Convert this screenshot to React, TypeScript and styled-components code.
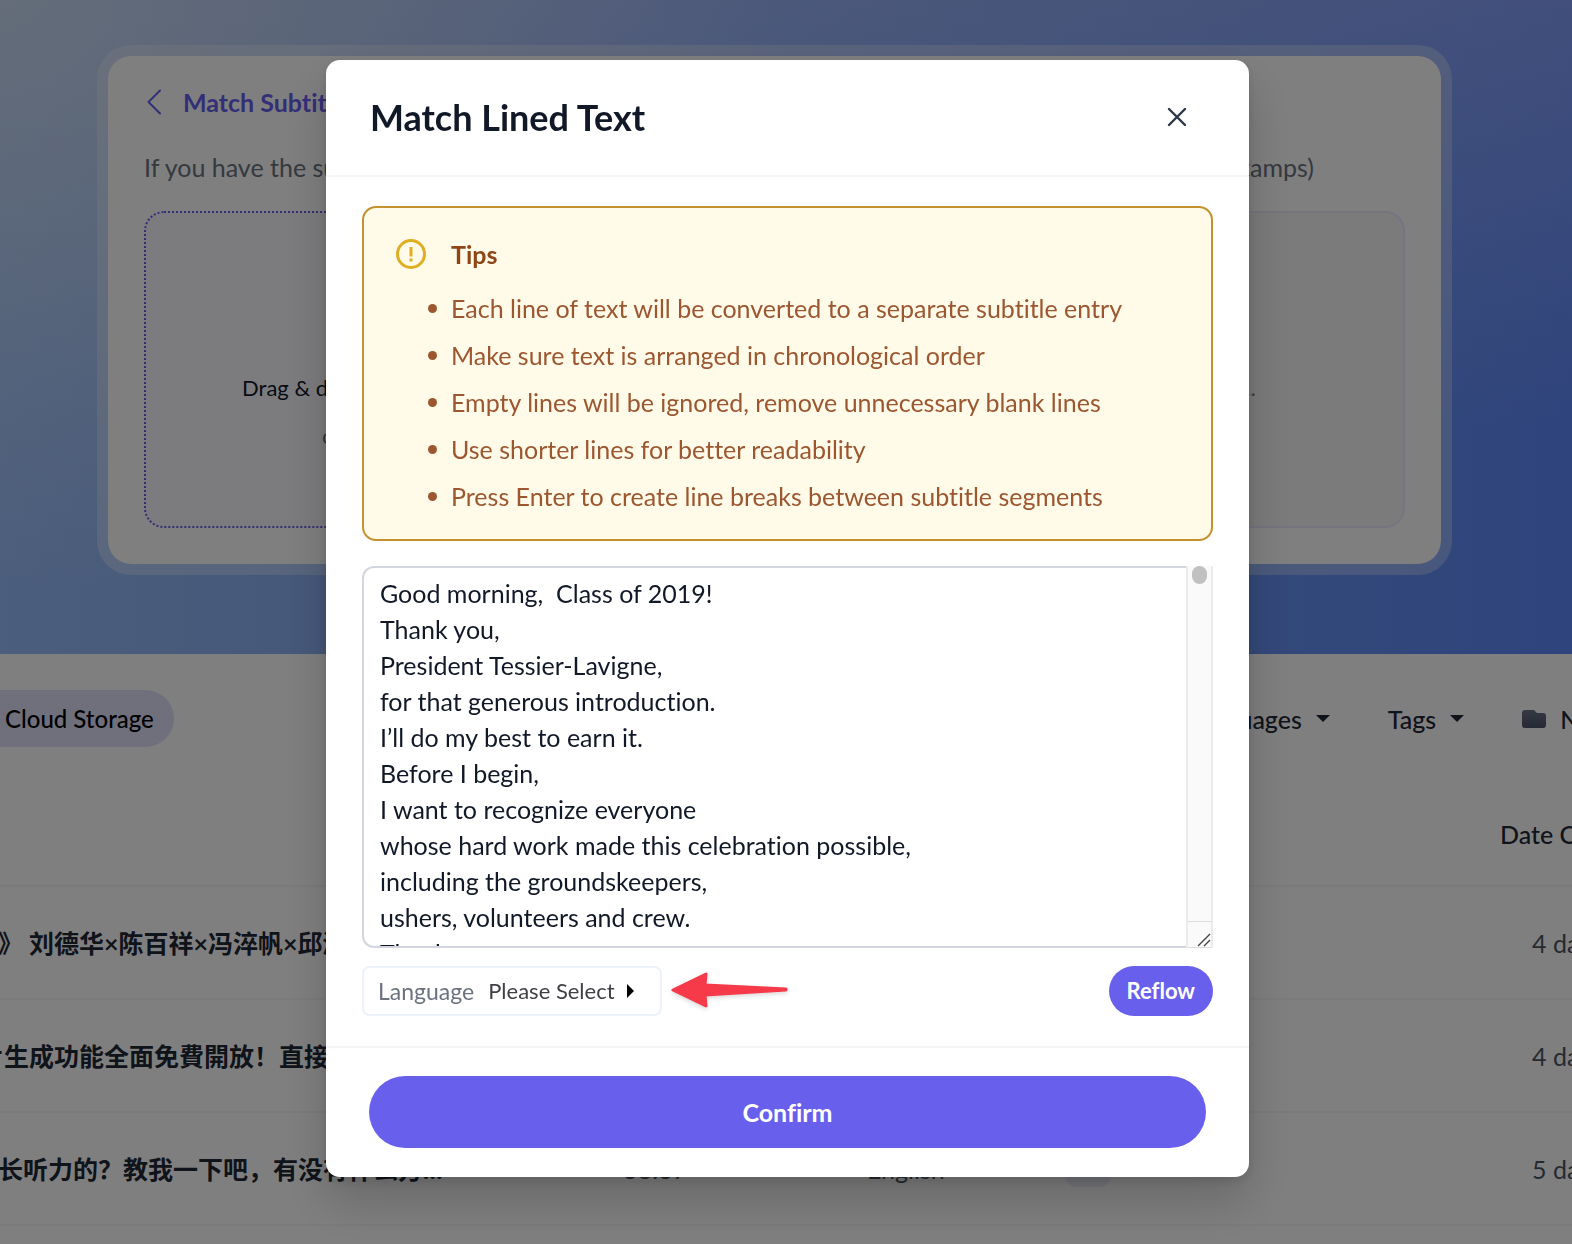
import React, { useState } from "react";
import styled, { createGlobalStyle } from "styled-components";

const GlobalStyle = createGlobalStyle`
  *, *::before, *::after { box-sizing: border-box; }
  html, body, #root { height: 100%; }
  body {
    margin: 0;
    overflow: hidden;
    background: #fff;
    color: #1f2937;
    font-family: Lato, "Noto Sans CJK SC", sans-serif;
    font-size: 25px;
    line-height: 36px;
    font-variant-ligatures: none;
  }
  button, select, textarea { font: inherit; font-variant-ligatures: none; color: inherit; margin: 0; }
  h1, h2, h3, p, ul { margin: 0; padding: 0; }
`;

const Page = styled.div`
  height: 100%;
  overflow: hidden;
`;

const Hero = styled.section`
  padding: 45px 120px 79px 97px;
  background:
    radial-gradient(ellipse 50% 90% at 0% 0%, rgba(228, 240, 236, 0.5), rgba(228, 240, 240, 0) 100%),
    linear-gradient(to bottom, rgba(225, 215, 250, 0.28), rgba(225, 215, 250, 0) 65%),
    linear-gradient(to right, #98bcfa 0%, #8cb0f4 22%, #6893f4 80%, #5e88f8 100%);
`;

const HeroCard = styled.div`
  display: flex;
  flex-direction: column;
  height: 530px;
  padding: 25px 36px 36px;
  border: 11px solid rgba(255, 255, 255, 0.3);
  border-radius: 34px;
  background: #fff;
  background-clip: padding-box;
`;

const BackButton = styled.button`
  display: flex;
  align-items: center;
  gap: 22px;
  align-self: flex-start;
  padding: 3px 3px;
  border: 0;
  background: none;
  color: #675eee;
  font-weight: 700;
`;

const Intro = styled.p`
  display: flex;
  justify-content: space-between;
  padding: 26px 91px 26px 0;
  color: #6b7280;
`;

const Zones = styled.div`
  display: grid;
  grid-template-columns: 1fr 1fr;
  gap: 24px;
  flex: 1;
`;

const Zone = styled.div<{ $active?: boolean }>`
  display: flex;
  flex-direction: column;
  align-items: center;
  justify-content: center;
  gap: 12px;
  padding-top: 84px;
  border: 2px ${(p) => (p.$active ? "dotted #675eee" : "solid #eaeaff")};
  border-radius: 20px;
  background: ${(p) => (p.$active ? "#f8f9ff" : "#f6f6f6")};
  font-size: 22px;
  color: #111827;
`;

const Muted = styled.span`
  color: #6b7280;
`;

const Toolbar = styled.div`
  display: flex;
  align-items: center;
  justify-content: space-between;
  padding-top: 36px;
`;

const Pill = styled.button`
  height: 57px;
  padding: 0 20px 0 5px;
  border: 0;
  border-radius: 0 29px 29px 0;
  background: #e1e0fa;
  color: #000;
  font-size: 24px;
  font-weight: 500;
`;

const Filters = styled.div`
  display: flex;
  align-items: center;
  gap: 58px;
  width: 386px;
  font-size: 25px;
  font-weight: 500;
`;

const Filter = styled.button`
  display: flex;
  flex: none;
  align-items: center;
  gap: 14px;
  padding: 0;
  border: 0;
  background: none;
`;

const Caret = styled.span`
  border: 7px solid transparent;
  border-top-color: currentColor;
  border-bottom: 0;
`;

const Recordings = styled.table`
  width: calc(100% + 127px);
  margin: 26px 0 0 -27px;
  border-collapse: collapse;
  table-layout: fixed;
  text-align: left;

  th, td {
    height: 113px;
    padding: 0;
    border-bottom: 2px solid #f7f7fc;
    white-space: nowrap;
    overflow: hidden;
  }
  th { padding-top: 10px; font-weight: 500; }
  td { color: #4b5563; }
  td:first-child { color: #1f2937; font-weight: 700; }
  td:last-child { padding-left: 32px; }
`;

const Col = styled.col<{ $w?: number }>`
  width: ${(p) => (p.$w ? `${p.$w}px` : "auto")};
`;

const Tag = styled.span`
  display: block;
  width: 46px;
  height: 36px;
  border-radius: 12px;
  background: #eef0fa;
`;

const Overlay = styled.div`
  position: fixed;
  inset: 0;
  display: flex;
  align-items: flex-start;
  justify-content: center;
  padding: 60px 20px 0 23px;
  background: rgba(0, 0, 0, 0.5);
`;

const Modal = styled.section`
  width: 100%;
  max-width: 923px;
  border-radius: 14px;
  background: #fff;
  box-shadow: 0 24px 48px rgba(0, 0, 0, 0.18), 0 4px 12px rgba(0, 0, 0, 0.12);
`;

const ModalHeader = styled.header`
  display: flex;
  align-items: center;
  justify-content: space-between;
  height: 117px;
  padding: 0 54px 2px 44px;
  border-bottom: 2px solid #f5f5f5;
`;

const ModalTitle = styled.h2`
  color: #111827;
  font-size: 36px;
  line-height: 44px;
  font-weight: 700;
`;

const CloseButton = styled.button`
  display: flex;
  padding: 8px;
  border: 0;
  background: none;
  color: #2b3648;
`;

const ModalBody = styled.div`
  padding: 29px 36px 30px;
`;

const Tips = styled.section`
  display: grid;
  grid-template-columns: 30px 1fr;
  column-gap: 25px;
  align-items: center;
  padding: 28px 32px 25px;
  border: 2px solid #c5902f;
  border-radius: 14px;
  background: #fffbe8;
  color: #9c5630;
`;

const TipsTitle = styled.h3`
  color: #8f4617;
  font-size: 25px;
  font-weight: 700;
`;

const TipList = styled.ul`
  grid-column: 2;
  display: flex;
  flex-direction: column;
  gap: 11px;
  margin-top: 18px;
  list-style: none;
`;

const Tip = styled.li`
  display: flex;
  align-items: center;
  gap: 14px;
  margin-left: -23px;

  &::before {
    content: "";
    width: 9px;
    height: 9px;
    border-radius: 50%;
    background: currentColor;
  }
`;

const Editor = styled.div`
  display: flex;
  height: 382px;
  margin: 25px 0 18px;
`;

const TextBox = styled.textarea`
  flex: 1;
  padding: 7px 16px;
  border: 2px solid #d3d6df;
  border-right: 0;
  border-radius: 12px 0 0 12px;
  background: #fff;
  color: #111827;
  white-space: pre;
  overflow: hidden;
  resize: none;
  outline: none;
`;

const ScrollTrack = styled.div`
  display: flex;
  flex-direction: column;
  align-items: center;
  justify-content: space-between;
  width: 27px;
  border: 2px solid #ebebeb;
  border-width: 0 2px;
  background: #fafafa;
`;

const Thumb = styled.span`
  width: 15px;
  height: 18px;
  border-radius: 8px;
  background: #c1c1c1;
`;

const Corner = styled.span`
  display: flex;
  align-items: flex-end;
  justify-content: flex-end;
  align-self: stretch;
  height: 27px;
  border: 1px solid #dcdcdc;
  border-width: 1px 0;
`;

const Actions = styled.div`
  display: flex;
  align-items: center;
  height: 50px;
`;

const LanguageField = styled.label`
  display: flex;
  align-items: center;
  height: 50px;
  width: 300px;
  padding: 0 14px;
  border: 2px solid #edf1fc;
  border-radius: 8px;
  color: #6b7280;
  font-size: 23px;
`;

const LanguageSelect = styled.select`
  margin-left: 14px;
  padding: 0;
  border: 0;
  background: none;
  color: #3f3f46;
  font-size: 22px;
  appearance: none;
  outline: none;
`;

const SelectArrow = styled.span`
  margin-left: 12px;
  border: 7px solid transparent;
  border-left-color: #000;
  border-right: 0;
`;

const Pointer = styled.svg`
  margin-left: 8px;
  filter: drop-shadow(0 2px 2px rgba(0, 0, 0, 0.15));
`;

const PrimaryButton = styled.button<{ $wide?: boolean }>`
  width: ${(p) => (p.$wide ? "100%" : "auto")};
  height: ${(p) => (p.$wide ? 72 : 50)}px;
  margin-left: auto;
  padding: 0 18px;
  border: 0;
  border-radius: 36px;
  background: #685fed;
  color: #fff;
  font-size: ${(p) => (p.$wide ? 25 : 22)}px;
  font-weight: 700;
`;

const ModalFooter = styled.footer`
  padding: 28px 43px 29px;
  border-top: 2px solid #f5f5f5;
`;

const tips = [
  "Each line of text will be converted to a separate subtitle entry",
  "Make sure text is arranged in chronological order",
  "Empty lines will be ignored, remove unnecessary blank lines",
  "Use shorter lines for better readability",
  "Press Enter to create line breaks between subtitle segments",
];

const speech = `Good morning,  Class of 2019!
Thank you,
President Tessier-Lavigne,
for that generous introduction.
I’ll do my best to earn it.
Before I begin,
I want to recognize everyone
whose hard work made this celebration possible,
including the groundskeepers,
ushers, volunteers and crew.
Thank you`;

const rows = [
  { title: "歌》 刘德华×陈百祥×冯淬帆×邱淑", duration: "", language: "", date: "4 days ago" },
  { title: "\u00a0片生成功能全面免費開放！直接", duration: "", language: "", date: "4 days ago" },
  { title: "成长听力的？教我一下吧，有没有什么方…", duration: "38:37", language: "English", date: "5 days ago" },
];

export default function App() {
  const [text, setText] = useState(speech);

  return (
    <>
      <GlobalStyle />
      <Page>
        <Hero>
          <HeroCard>
            <BackButton>
              <svg width="14" height="26" viewBox="0 0 14 26" fill="none" stroke="currentColor" strokeWidth="2" strokeLinecap="round" strokeLinejoin="round">
                <path d="M13 1.5 1.5 13 13 24.5" />
              </svg>
              Match Subtitles
            </BackButton>
            <Intro>
              <span>If you have the subtitle text</span>
              <span>(without timestamps)</span>
            </Intro>
            <Zones>
              <Zone $active>
                <span>Drag &amp; drop an audio or video file to upload</span>
                <Muted>or click here to choose files</Muted>
              </Zone>
              <Zone>
                <Muted>Text will be matched with audio...</Muted>
                <span>&nbsp;</span>
              </Zone>
            </Zones>
          </HeroCard>
        </Hero>

        <Toolbar>
          <Pill>Cloud Storage</Pill>
          <Filters>
            <Filter>Languages<Caret /></Filter>
            <Filter>Tags<Caret /></Filter>
            <Filter>
              <svg width="24" height="20" viewBox="0 0 24 20">
                <defs>
                  <linearGradient id="folder" x1="0" y1="0" x2="0" y2="1">
                    <stop offset="0" stopColor="#6b7388" />
                    <stop offset="1" stopColor="#4b5366" />
                  </linearGradient>
                </defs>
                <path fill="url(#folder)" d="M3 1h9l3 3h6a3 3 0 0 1 3 3v9a3 3 0 0 1-3 3H3a3 3 0 0 1-3-3V4a3 3 0 0 1 3-3z" />
              </svg>
              New
            </Filter>
          </Filters>
        </Toolbar>

        <Recordings>
          <colgroup>
            <Col $w={650} />
            <Col $w={244} />
            <Col $w={198} />
            <Col />
            <Col $w={172} />
          </colgroup>
          <thead>
            <tr>
              <th /><th /><th /><th />
              <th>Date Created</th>
            </tr>
          </thead>
          <tbody>
            {rows.map((row) => (
              <tr key={row.title}>
                <td>{row.title}</td>
                <td>{row.duration}</td>
                <td>{row.language}</td>
                <td>{row.language && <Tag />}</td>
                <td>{row.date}</td>
              </tr>
            ))}
          </tbody>
        </Recordings>
      </Page>

      <Overlay>
        <Modal role="dialog" aria-labelledby="modal-title">
          <ModalHeader>
            <ModalTitle id="modal-title">Match Lined Text</ModalTitle>
            <CloseButton aria-label="Close">
              <svg width="20" height="20" viewBox="0 0 20 20" stroke="currentColor" strokeWidth="2.4" strokeLinecap="round">
                <path d="M2 2l16 16M18 2 2 18" />
              </svg>
            </CloseButton>
          </ModalHeader>

          <ModalBody>
            <Tips>
              <svg width="30" height="30" viewBox="0 0 30 30" fill="none" stroke="#dfae22" strokeWidth="3">
                <circle cx="15" cy="15" r="13.5" />
                <path d="M15 8v9.5M15 19.5v3" />
              </svg>
              <TipsTitle>Tips</TipsTitle>
              <TipList>
                {tips.map((tip) => (
                  <Tip key={tip}>{tip}</Tip>
                ))}
              </TipList>
            </Tips>

            <Editor>
              <TextBox aria-label="Lined text" value={text} onChange={(e) => setText(e.target.value)} />
              <ScrollTrack>
                <Thumb />
                <Corner>
                  <svg width="14" height="14" viewBox="0 0 14 14" stroke="#444" strokeWidth="1.4">
                    <path d="M1 13 13 1M7 13l6-6" />
                  </svg>
                </Corner>
              </ScrollTrack>
            </Editor>

            <Actions>
              <LanguageField>
                Language
                <LanguageSelect defaultValue="">
                  <option value="">Please Select</option>
                </LanguageSelect>
                <SelectArrow />
              </LanguageField>
              <Pointer width="120" height="40" viewBox="0 0 120 40" fill="#f63a4a" stroke="#f63a4a" strokeWidth="3" strokeLinejoin="round">
                <path d="M3 19 36 3l-1 11 81 4v1l-81 5 1 11z" />
              </Pointer>
              <PrimaryButton>Reflow</PrimaryButton>
            </Actions>
          </ModalBody>

          <ModalFooter>
            <PrimaryButton $wide>Confirm</PrimaryButton>
          </ModalFooter>
        </Modal>
      </Overlay>
    </>
  );
}
